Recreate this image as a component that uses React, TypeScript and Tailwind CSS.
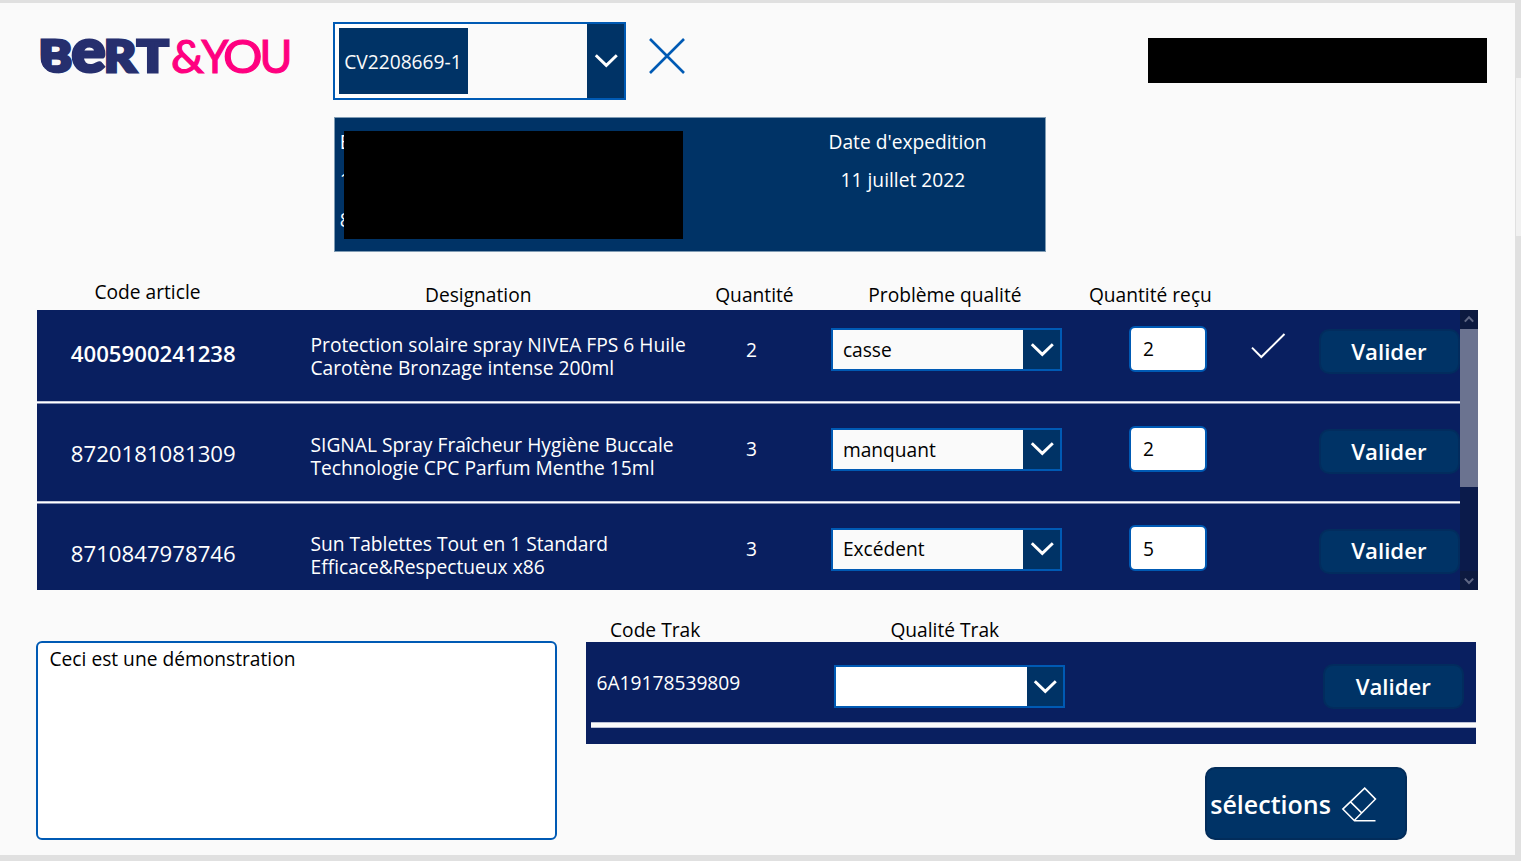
import React from "react";

function Chevron() {
  return (
    <svg width="24" height="16" viewBox="0 0 24 16" fill="none" className="block shrink-0">
      <path d="M1.8 2.2 L12.3 12.4 L22.8 2.2" stroke="#fff" strokeWidth="2.9" />
    </svg>
  );
}

function Logo() {
  return (
    <svg width="256" height="46" viewBox="0 0 256 46" className="block overflow-visible" style={{ fontFamily: "Lato, sans-serif" }}>
      <clipPath id="logo-corner">
        <path d="M2 0 H134 V46 H20 V38.7 C9 38.7 2 31 2 20 Z" />
      </clipPath>
      <g fill="#262f6e" stroke="#262f6e" strokeWidth="3.2" fontWeight="900" clipPath="url(#logo-corner)">
        <text x="0.6" y="37.1" fontSize="44.6" textLength="33.5" lengthAdjust="spacingAndGlyphs">B</text>
        <text x="33.6" y="37.1" fontSize="60.5" textLength="34" lengthAdjust="spacingAndGlyphs">e</text>
        <text x="66" y="37.1" fontSize="44.6" textLength="32" lengthAdjust="spacingAndGlyphs">R</text>
        <text x="99" y="37.1" fontSize="44.6" textLength="31.5" lengthAdjust="spacingAndGlyphs">T</text>
      </g>
      <g fill="#ff0080" stroke="#ff0080" strokeWidth="1.2" fontSize="47">
        <text x="133" y="38" textLength="33" lengthAdjust="spacingAndGlyphs">&amp;</text>
        <text x="163.5" y="38" textLength="27" lengthAdjust="spacingAndGlyphs">Y</text>
        <text x="185" y="38" textLength="39.5" lengthAdjust="spacingAndGlyphs">O</text>
        <text x="221.5" y="38" textLength="33" lengthAdjust="spacingAndGlyphs">U</text>
      </g>
    </svg>
  );
}

function Select({ value, fill }: { value: string; fill: string }) {
  return (
    <div className="flex h-[43px] w-[231px] shrink-0 border-2 border-[#005ab4] bg-[#003366]">
      <div className={`flex h-full w-[190.5px] items-center pt-[0.4px] pl-[9.9px] text-black ${fill}`}>{value}</div>
      <div className="flex h-full flex-1 items-center justify-center pl-px">
        <Chevron />
      </div>
    </div>
  );
}

function Valider() {
  return (
    <button className="flex h-[45px] w-[141px] shrink-0 items-center justify-center rounded-[10px] border-2 border-[#022c5e] bg-[#003366] pr-px text-[22.2px] leading-7 font-semibold text-white">
      Valider
    </button>
  );
}

type Article = { code: string; lines: string[]; qty: string; problem: string; received: string; done?: boolean };

const articles: Article[] = [
  {
    code: "4005900241238",
    lines: ["Protection solaire spray NIVEA FPS 6 Huile", "Carotène Bronzage intense 200ml"],
    qty: "2",
    problem: "casse",
    received: "2",
    done: true,
  },
  {
    code: "8720181081309",
    lines: ["SIGNAL Spray Fraîcheur Hygiène Buccale", "Technologie CPC Parfum Menthe 15ml"],
    qty: "3",
    problem: "manquant",
    received: "2",
  },
  {
    code: "8710847978746",
    lines: ["Sun Tablettes Tout en 1 Standard", "Efficace&Respectueux x86"],
    qty: "3",
    problem: "Excédent",
    received: "5",
  },
];

function Row({ a }: { a: Article }) {
  return (
    <div className="h-[99.7px] shrink-0">
      <div className="flex h-[91.3px] items-start text-white">
        <div className={`ml-[33.8px] w-[239.7px] pt-[30.4px] text-[22.2px] leading-7 ${a.done ? "font-semibold" : ""}`}>
          {a.code}
        </div>
        <div className="w-[435.5px] pt-[23.1px] text-[19.23px] leading-[23px] whitespace-nowrap">
          {a.lines.map((l) => (
            <div key={l}>{l}</div>
          ))}
        </div>
        <div className="w-[85px] pt-[27.8px] leading-6">{a.qty}</div>
        <div className="w-[298px] pt-[18.3px]">
          <Select value={a.problem} fill="bg-[#fafafa]" />
        </div>
        <div className="w-[122px] pt-[16px]">
          <div className="flex h-[46px] w-[78px] items-center rounded-[6px] border-2 border-[#005ab4] bg-white pt-[0.9px] pl-[12px] text-black">
            {a.received}
          </div>
        </div>
        <div className="w-[67.9px] pt-[22px]">
          {a.done && (
            <svg width="36" height="30" viewBox="0 0 36 30" fill="none">
              <path d="M1 15.6 L10.3 25 L33.5 2" stroke="#fff" strokeWidth="2" />
            </svg>
          )}
        </div>
        <div className="pt-[19.4px]">
          <Valider />
        </div>
      </div>
      <div className="h-[3px] border-t border-b border-t-[#c3c8da] border-b-[#8790b2] bg-white" />
    </div>
  );
}

function ListScrollbar() {
  return (
    <div className="flex w-[18px] shrink-0 flex-col bg-[#0b1b4b]">
      <div className="flex h-[19px] items-center justify-center bg-[#0d1a40] pr-px pb-px">
        <svg width="10" height="8" viewBox="0 0 10 8" fill="none">
          <path d="M0.8 6.6 L5 2.2 L9.2 6.6" stroke="#5f6784" strokeWidth="2" />
        </svg>
      </div>
      <div className="h-[158px] bg-[#6b7390]" />
      <div className="mt-auto flex h-[19px] items-center justify-center bg-[#0d1a40] pr-px">
        <svg width="10" height="8" viewBox="0 0 10 8" fill="none">
          <path d="M0.8 1.6 L5 6 L9.2 1.6" stroke="#5f6784" strokeWidth="2" />
        </svg>
      </div>
    </div>
  );
}

export default function App() {
  return (
    <div className="flex h-[861px] w-[1521px] overflow-hidden bg-[#e0e0e0] pt-[3px] font-['Open_Sans',sans-serif] text-[19.2px] leading-6 text-black">
      <main className="h-[852px] w-[1515px] shrink-0 bg-[#fafafa]">
        <header className="flex h-[114px] items-start pt-[19px]">
          <div className="ml-[38px] w-[295px] pt-[13px]">
            <Logo />
          </div>
          <div className="flex h-[78px] w-[293px] border-2 border-[#005ab4]">
            <div className="flex w-[252px]">
              <div className="h-full bg-white p-1 pr-0">
                <div className="flex h-full w-[129px] items-center bg-[#003366] pt-[2px] pl-[5.2px] text-[#fafafa]">
                  CV2208669-1
                </div>
              </div>
            </div>
            <div className="flex flex-1 items-center justify-center bg-[#003366]">
              <Chevron />
            </div>
          </div>
          <svg width="38" height="38" viewBox="0 0 38 38" fill="none" className="mt-[14.5px] ml-[22px]">
            <path d="M2 2 L36 36 M36 2 L2 36" stroke="#005ab4" strokeWidth="2.6" />
          </svg>
          <div className="mt-4 ml-[462px] h-[45px] w-[339px] bg-black" />
        </header>

        <section className="ml-[334px] flex h-[135px] w-[712px] items-start border border-[#7f9bb3] bg-[#003366] text-white">
          <div className="relative h-full w-[493.5px]">
            <div className="pt-[12px] pl-[4.7px]">E</div>
            <div className="pt-[14px] pl-[4.7px]">1</div>
            <div className="pt-[16px] pl-[4.7px]">8</div>
            <div className="absolute top-[13px] left-[9px] h-[108px] w-[339px] bg-black" />
          </div>
          <div className="pt-[12px] whitespace-nowrap">
            <div>Date d'expedition</div>
            <div className="pt-[14px] pl-[12.1px]">11 juillet 2022</div>
          </div>
        </section>

        <div className="flex h-[58px] items-end pb-[3px] whitespace-nowrap">
          <div className="w-[425px] pb-[3px] pl-[94.4px]">Code article</div>
          <div className="w-[290.2px]">Designation</div>
          <div className="w-[153.1px]">Quantité</div>
          <div className="w-[220.6px]">Problème qualité</div>
          <div>Quantité reçu</div>
        </div>

        <section className="ml-[37px] flex h-[280px] w-[1441px] bg-[#091f60]">
          <div className="h-full w-[1423px] overflow-hidden">
            {articles.map((a) => (
              <Row key={a.code} a={a} />
            ))}
          </div>
          <ListScrollbar />
        </section>

        <div className="flex items-start pl-9">
          <div className="mt-[51px] h-[199px] w-[521px] rounded-[6px] border-2 border-[#005ab4] bg-white pt-[4px] pl-[11.5px]">
            Ceci est une démonstration
          </div>
          <div className="ml-[29px] w-[890px]">
            <div className="flex h-[52px] items-end whitespace-nowrap">
              <div className="w-[304.4px] pl-6">Code Trak</div>
              <div>Qualité Trak</div>
            </div>
            <section className="h-[102px] bg-[#091f60]">
              <div className="flex h-20 items-start text-white">
                <div className="w-[248px] pt-[29px] pl-[10.5px]">6A19178539809</div>
                <div className="w-[489.3px] pt-[23px]">
                  <Select value="" fill="bg-white" />
                </div>
                <div className="pt-[22px]">
                  <Valider />
                </div>
              </div>
              <div className="ml-[5px] h-[6px] border-t border-b border-[#b9bfd4] bg-[#fafafa]" />
            </section>
            <button className="mt-[23px] ml-[619px] flex h-[73px] w-[202px] items-center rounded-[10px] border-2 border-[#022c5a] bg-[#003366] pl-[3.3px] text-[25px] font-semibold text-white">
              <span className="w-[130.5px] pt-[0.5px] text-left">sélections</span>
              <svg width="36" height="36" viewBox="0 0 36 36" fill="none" stroke="#fff" strokeWidth="1.5">
                <path d="M34.5 34.7 H13.5 L1.8 23.1 L23.7 2.1 L34.5 13.1 L13.2 34.5 M9.5 15.9 L20.6 26.9" />
              </svg>
            </button>
          </div>
        </div>
      </main>
      <div className="ml-px h-[158px] w-[5px] translate-y-[75px] bg-[#f1f1f1]" />
    </div>
  );
}
